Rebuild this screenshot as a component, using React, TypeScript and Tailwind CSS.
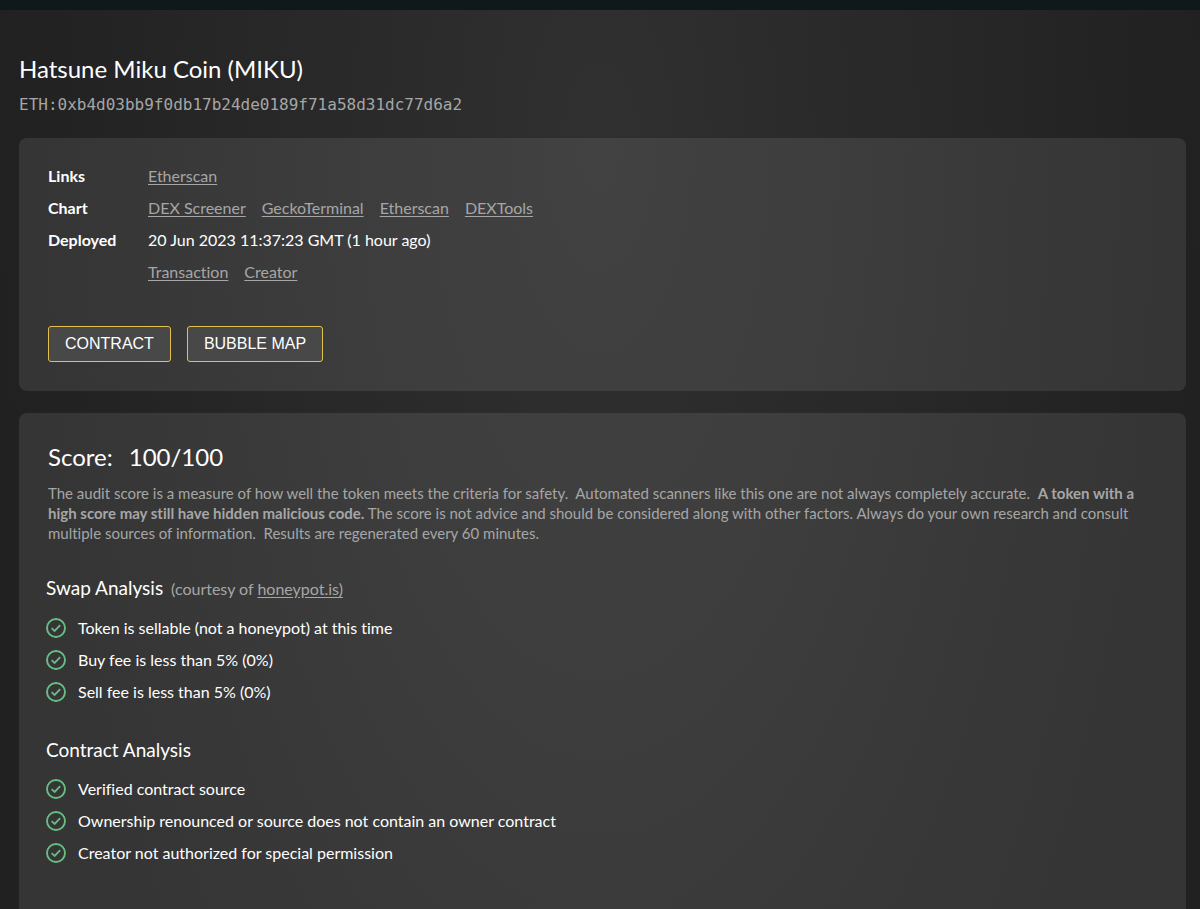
import type { ReactNode } from "react";

const swapChecks = [
  "Token is sellable (not a honeypot) at this time",
  "Buy fee is less than 5% (0%)",
  "Sell fee is less than 5% (0%)",
];

const contractChecks = [
  "Verified contract source",
  "Ownership renounced or source does not contain an owner contract",
  "Creator not authorized for special permission",
];

function TextLink({ children }: { children: ReactNode }) {
  return (
    <a href="#" className="text-[#a6a6a6] underline underline-offset-2 hover:text-white">
      {children}
    </a>
  );
}

function CheckIcon() {
  return (
    <svg viewBox="0 0 20 20" className="size-5 shrink-0" fill="none" aria-hidden="true">
      <circle cx="10" cy="10" r="9" stroke="#68be84" strokeWidth="1.9" />
      <path d="M5.6 10.2 8.6 12.9 14.2 7.2" stroke="#68be84" strokeWidth="1.8" />
    </svg>
  );
}

function CheckList({ items }: { items: string[] }) {
  return (
    <ul>
      {items.map((item) => (
        <li key={item} className="flex h-8 items-center gap-3">
          <CheckIcon />
          <span>{item}</span>
        </li>
      ))}
    </ul>
  );
}

function InfoRow({ label, children }: { label: string; children: ReactNode }) {
  return (
    <div className="flex leading-8">
      <dt className="w-[100px] shrink-0 font-bold">{label}</dt>
      <dd className="flex flex-wrap gap-x-4">{children}</dd>
    </div>
  );
}

function ActionButton({ children }: { children: ReactNode }) {
  return (
    <button
      type="button"
      className="h-9 rounded-[3px] border border-[#e3c04a] bg-[#484848] px-4 font-['Liberation_Sans',Arial,sans-serif] text-base text-white"
    >
      {children}
    </button>
  );
}

export default function App() {
  return (
    <div className="flex min-h-screen flex-col bg-[#222] font-['Lato','Open_Sans',sans-serif] text-base text-white [font-variant-ligatures:none]">
      <div className="h-[10px] bg-[#0f191c]" />
      <main className="flex grow flex-col bg-[radial-gradient(ellipse_50%_150%_at_50%_15%,#303030,#212121)] pr-[14px] pl-[19px]">
        <header className="pt-[39px] pb-[19px]">
          <h1 className="text-2xl leading-10">Hatsune Miku Coin (MIKU)</h1>
          <p className="mt-[2px] font-['DejaVu_Sans_Mono',monospace] text-base leading-7 text-[#a6a6a6]">
            ETH:0xb4d03bb9f0db17b24de0189f71a58d31dc77d6a2
          </p>
        </header>

        <section className="rounded-lg bg-white/9 px-[29px] pt-[22px] pb-[29px]">
          <dl>
            <InfoRow label="Links">
              <TextLink>Etherscan</TextLink>
            </InfoRow>
            <InfoRow label="Chart">
              <TextLink>DEX Screener</TextLink>
              <TextLink>GeckoTerminal</TextLink>
              <TextLink>Etherscan</TextLink>
              <TextLink>DEXTools</TextLink>
            </InfoRow>
            <InfoRow label="Deployed">
              <div>
                <div>20 Jun 2023 11:37:23 GMT (1 hour ago)</div>
                <div className="flex gap-4">
                  <TextLink>Transaction</TextLink>
                  <TextLink>Creator</TextLink>
                </div>
              </div>
            </InfoRow>
          </dl>
          <div className="mt-[38px] flex flex-wrap gap-4">
            <ActionButton>CONTRACT</ActionButton>
            <ActionButton>BUBBLE MAP</ActionButton>
          </div>
        </section>

        <section className="mt-[22px] grow rounded-t-lg bg-white/9 px-[27px] pt-6">
          <div className="px-0.5">
            <h2 className="flex gap-4 text-2xl leading-10">
              <span>Score:</span>
              <span>100/100</span>
            </h2>
            <p className="mt-[6px] text-[15px] leading-5 text-[#a6a6a6]">
              The audit score is a measure of how well the token meets the criteria for safety.&nbsp; Automated
              scanners like this one are not always completely accurate.&nbsp;{" "}
              <strong>A token with a high score may still have hidden malicious code.</strong> The score is not
              advice and should be considered along with other factors. Always do your own research and consult
              multiple sources of information.&nbsp; Results are regenerated every 60 minutes.
            </p>
          </div>

          <div className="mt-[25px]">
            <h3 className="flex items-baseline gap-2 pb-[3px] text-[19px] leading-10">
              Swap Analysis
              <small className="text-base leading-10 text-[#a6a6a6]">
                (courtesy of <TextLink>honeypot.is)</TextLink>
              </small>
            </h3>
            <CheckList items={swapChecks} />
          </div>

          <div className="mt-[22px] pb-10">
            <h3 className="pb-[3px] text-[19px] leading-10">Contract Analysis</h3>
            <CheckList items={contractChecks} />
          </div>
        </section>
      </main>
    </div>
  );
}
